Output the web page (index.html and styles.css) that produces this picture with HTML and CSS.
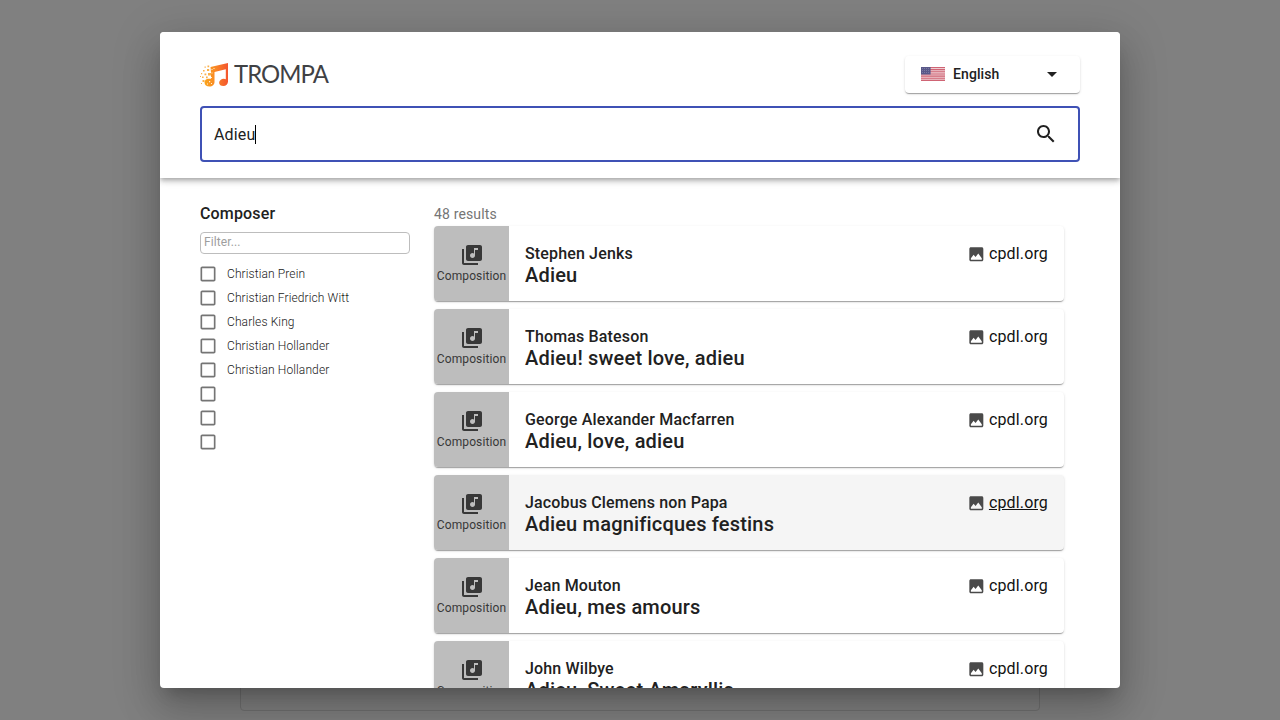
FILE: index.html
```html
<!DOCTYPE html>
<html lang="en">
<head>
<meta charset="utf-8">
<title>Trompa</title>
<link rel="stylesheet" href="styles.css">
</head>
<body>
<svg width="0" height="0" class="defs">
  <symbol id="library" viewBox="0 0 24 24"><path d="M20 2H8c-1.100 0-2 .9-2 2v12c0 1.100.9 2 2 2h12c1.100 0 2-.9 2-2V4c0-1.100-.9-2-2-2zm-2 5h-3v5.500c0 1.380-1.120 2.500-2.500 2.500S10 13.880 10 12.500s1.120-2.500 2.500-2.500c.57 0 1.080.19 1.500.51V5h4v2zM4 6H2v14c0 1.100.9 2 2 2h14v-2H4V6z"/></symbol>
  <symbol id="image" viewBox="0 0 24 24"><path d="M21 19V5c0-1.100-.9-2-2-2H5c-1.100 0-2 .9-2 2v14c0 1.100.9 2 2 2h14c1.100 0 2-.9 2-2zM5 19v-2l3.500-4.500 2.500 3.010L14.500 11l4.500 6v2z"/></symbol>
  <symbol id="box" viewBox="0 0 24 24"><path d="M19 5v14H5V5h14m0-2H5c-1.100 0-2 .9-2 2v14c0 1.100.9 2 2 2h14c1.100 0 2-.9 2-2V5c0-1.100-.9-2-2-2z"/></symbol>
</svg>
<div class="page-panel"></div>
<div class="dialog">
  <header class="header">
    <div class="top">
      <svg class="logo" width="136" height="36" viewBox="0 0 136 36">
        <defs><linearGradient id="g" gradientUnits="userSpaceOnUse" x1="4" x2="28" y1="0" y2="0"><stop offset="0" stop-color="#faa61a"/><stop offset=".45" stop-color="#f98a25"/><stop offset="1" stop-color="#f4552f"/></linearGradient></defs>
        <path fill="url(#g)" d="M10.500 6L28 2v18.500c0 2.500-2 4.500-4.700 4.500-2.400 0-4.200-1.300-4.200-3.300 0-2.200 2.200-4 4.700-4 .8 0 1.500.2 2 .5V8.200L14.500 11v10c0 2.500-2 4.500-5 4.500-2.800 0-5-1.500-5-4 0-2.200 1.800-3.800 4-3.800h2.500v-6z"/>
        <path fill="#fab04a" d="M7.500 4.500h1.700v1.700H7.500zM4.500 5.500h1.300v1.300H4.500zM7 8h2.200v2H7zM3 9h1.600v1.600H3zM1 12h1.200v1.200H1zM4.500 12.500h1.800v1.800H4.500zM8 12h3v2.500H8zM2 15.500h1.600v1.600H2zM6 15.500h1.700v1.700H6zM0 15h1v1H0zM2.500 19h2v2h-2zM1 22h1v1H1z"/>
        <path fill="#fff0d8" d="M11.500 8h1v1h-1zM13.500 7h1v1h-1zM11.500 11.500h1v1h-1zM9 20h1.200v1.200H9zM11 22h1v1h-1zM7 22.500h1v1H7zM11 16h1v1h-1z"/>
        <text class="logo-text" x="34" y="22.300" textLength="94" lengthAdjust="spacingAndGlyphs">TROMPA</text>
      </svg>
      <div class="language">
        <svg class="flag" width="24" height="14" viewBox="0 0 24 14">
          <path fill="#efcdd2" d="M0 0h24v14H0z"/>
          <path d="M0 .5h24M0 2.650h24M0 4.800h24M0 6.950h24M0 9.100h24M0 11.250h24M0 13.400h24" stroke="#cf6474" stroke-width="1.080"/>
          <path fill="#595889" d="M0 0h9.600v7.500H0z"/>
          <path d="M1 1.500h8M1 3.500h8M1 5.500h8" stroke="#8988ae" stroke-width=".7" stroke-dasharray="1 1"/>
        </svg>
        <span class="language-name">English</span>
        <svg class="arrow" width="24" height="24" viewBox="0 0 24 24"><path d="M7 10l5 5 5-5z"/></svg>
      </div>
    </div>
    <div class="search"><span>Adieu</span><i class="caret"></i>
      <svg class="search-icon" width="24" height="24" viewBox="0 0 24 24"><path d="M15.500 14h-.79l-.28-.27C15.410 12.590 16 11.110 16 9.500 16 5.910 13.090 3 9.500 3S3 5.910 3 9.500 5.910 16 9.500 16c1.610 0 3.090-.59 4.230-1.570l.27.280v.79l5 4.990L20.490 19l-4.990-5zm-6 0C7.010 14 5 11.990 5 9.500S7.010 5 9.500 5 14 7.010 14 9.500 11.990 14 9.500 14z"/></svg>
    </div>
  </header>
  <main class="content">
    <aside class="facets">
      <h2 class="facet-title">Composer</h2>
      <div class="filter">Filter...</div>
      <ul class="options">
        <li><svg><use href="#box"/></svg>Christian Prein</li>
        <li><svg><use href="#box"/></svg>Christian Friedrich Witt</li>
        <li><svg><use href="#box"/></svg>Charles King</li>
        <li><svg><use href="#box"/></svg>Christian Hollander</li>
        <li><svg><use href="#box"/></svg>Christian Hollander</li>
        <li><svg><use href="#box"/></svg></li>
        <li><svg><use href="#box"/></svg></li>
        <li><svg><use href="#box"/></svg></li>
      </ul>
    </aside>
    <section class="results">
      <div class="count">48 results</div>
      <article class="card"><div class="kind"><svg><use href="#library"/></svg>Composition</div><div class="info"><div class="author">Stephen Jenks</div><div class="title">Adieu</div></div><div class="source"><svg><use href="#image"/></svg><span>cpdl.org</span></div></article>
      <article class="card"><div class="kind"><svg><use href="#library"/></svg>Composition</div><div class="info"><div class="author">Thomas Bateson</div><div class="title">Adieu! sweet love, adieu</div></div><div class="source"><svg><use href="#image"/></svg><span>cpdl.org</span></div></article>
      <article class="card"><div class="kind"><svg><use href="#library"/></svg>Composition</div><div class="info"><div class="author">George Alexander Macfarren</div><div class="title">Adieu, love, adieu</div></div><div class="source"><svg><use href="#image"/></svg><span>cpdl.org</span></div></article>
      <article class="card active"><div class="kind"><svg><use href="#library"/></svg>Composition</div><div class="info"><div class="author">Jacobus Clemens non Papa</div><div class="title">Adieu magnificques festins</div></div><div class="source"><svg><use href="#image"/></svg><span>cpdl.org</span></div></article>
      <article class="card"><div class="kind"><svg><use href="#library"/></svg>Composition</div><div class="info"><div class="author">Jean Mouton</div><div class="title">Adieu, mes amours</div></div><div class="source"><svg><use href="#image"/></svg><span>cpdl.org</span></div></article>
      <article class="card"><div class="kind"><svg><use href="#library"/></svg>Composition</div><div class="info"><div class="author">John Wilbye</div><div class="title">Adieu, Sweet Amaryllis</div></div><div class="source"><svg><use href="#image"/></svg><span>cpdl.org</span></div></article>
    </section>
  </main>
</div>
</body>
</html>
```
FILE: styles.css
```css
* { box-sizing: border-box; }
body {
  margin: 0;
  height: 720px;
  padding: 32px 160px;
  overflow: hidden;
  background: #808080;
  color: #212121;
  font-family: Roboto, sans-serif;
  -webkit-font-smoothing: antialiased;
}
.defs { position: absolute; }
.page-panel {
  position: absolute;
  left: 240px;
  top: 400px;
  width: 800px;
  height: 311px;
  border: 1px solid #707070;
  border-radius: 4px;
}
.dialog {
  position: relative;
  display: flex;
  flex-direction: column;
  height: 656px;
  overflow: hidden;
  border-radius: 4px;
  background: #fff;
  box-shadow: 0 11px 15px -7px rgba(0,0,0,.2), 0 24px 38px 3px rgba(0,0,0,.14), 0 9px 46px 8px rgba(0,0,0,.12);
}
.header {
  flex: none;
  position: relative;
  height: 146px;
  padding: 24px 40px 0;
  background: #fff;
  box-shadow: 0 2px 4px -1px rgba(0,0,0,.2), 0 4px 5px 0 rgba(0,0,0,.14), 0 1px 10px 0 rgba(0,0,0,.12);
}
.top { display: flex; justify-content: space-between; height: 50px; }
.logo { margin-top: 5px; }
.logo-text { font: 400 25px Lato, sans-serif; letter-spacing: -1px; fill: #3f4144; }
.language {
  display: flex;
  align-items: center;
  width: 175px;
  height: 37px;
  padding: 0 16px;
  border-radius: 4px;
  box-shadow: 0 2px 1px -1px rgba(0,0,0,.2), 0 1px 1px 0 rgba(0,0,0,.14), 0 1px 3px 0 rgba(0,0,0,.12);
}
.flag, .arrow { margin-bottom: 1px; }
.language-name { flex: 1; margin-left: 8px; font-size: 14px; line-height: 17px; font-weight: 500; letter-spacing: .1px; }
.arrow { fill: #212121; }
.search {
  display: flex;
  align-items: center;
  height: 56px;
  padding: 0 20px 0 12px;
  border: 2px solid #3f51b5;
  border-radius: 4px;
  font-size: 16px;
  letter-spacing: .15px;
}
.caret { width: 1px; height: 19px; background: #000; }
.search-icon { margin-left: auto; fill: #212121; }
.content { display: flex; gap: 24px; padding: 26px 56px 0 40px; }
.facets { width: 210px; }
.facet-title { margin: 0; font-size: 16px; line-height: 20px; font-weight: 500; letter-spacing: .15px; }
.filter {
  height: 22px;
  margin-top: 8px;
  padding: 0 3px;
  border: 1px solid #bdbdbd;
  border-radius: 4px;
  color: #9e9e9e;
  font-size: 12px;
  line-height: 18px;
  letter-spacing: .11px;
}
.options { margin: 8px 0 0; padding: 0; list-style: none; }
.options li { display: flex; align-items: center; height: 24px; font-size: 12px; font-weight: 300; letter-spacing: .11px; }
.options svg { width: 20px; height: 20px; margin: 0 9px 0 -2px; fill: #757575; }
.results { flex: 1; }
.count { height: 22px; font-size: 14px; line-height: 20px; letter-spacing: .15px; color: #757575; }
.card {
  display: flex;
  height: 75px;
  margin-bottom: 8px;
  overflow: hidden;
  border-radius: 4px;
  background: #fff;
  box-shadow: 0 2px 1px -1px rgba(0,0,0,.2), 0 1px 1px 0 rgba(0,0,0,.14), 0 1px 3px 0 rgba(0,0,0,.12);
}
.card.active { background: #f5f5f5; }
.active .source span { text-decoration: underline; }
.kind {
  display: flex;
  flex-direction: column;
  align-items: center;
  width: 75px;
  padding-top: 17px;
  background: #bdbdbd;
  color: #383838;
  font-size: 12px;
  line-height: 18px;
  letter-spacing: .11px;
}
.kind svg { width: 24px; height: 24px; fill: #383838; }
.info { flex: 1; padding: 16px 0 0 16px; font-weight: 500; }
.author { font-size: 16px; line-height: 24px; letter-spacing: .15px; }
.title { font-size: 20px; line-height: 18px; letter-spacing: .19px; white-space: nowrap; }
.source { display: flex; align-items: center; height: 24px; margin: 16px 16px 0 0; font-size: 16px; line-height: 20px; letter-spacing: .15px; color: #111; }
.source svg { width: 18.670px; height: 18.670px; margin-right: 3.300px; fill: #4a4a4a; }
```
